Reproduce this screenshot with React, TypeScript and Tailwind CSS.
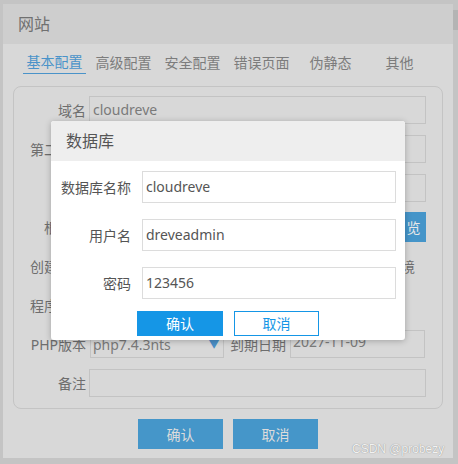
import React from "react"

const font = { fontFamily: '"Noto Sans", "Noto Sans CJK SC", sans-serif' }

function Row({ label, children }: { label: string; children?: React.ReactNode }) {
  return (
    <div className="flex h-[28px] items-center">
      <div className="w-[75px] shrink-0 pr-[3px] text-right text-[14px] text-[#6e6e6e]">{label}</div>
      {children}
    </div>
  )
}

function Field({ value, w = "w-[337px]" }: { value?: string; w?: string }) {
  return <div className={`${w} h-full border border-[#c3c3c3] pl-[3px] text-[14px] leading-[26px] text-[#7a7a7a]`}>{value}</div>
}

function DialogRow({ label, value }: { label: string; value: string }) {
  return (
    <div className="flex h-[32px] items-center">
      <div className="w-[80px] shrink-0 text-right text-[14px] text-[#555]">{label}</div>
      <div className="ml-[11px] h-full w-[254px] border border-[#dcdcdc] pl-[3px] text-[14px] leading-[30px] text-[#555]">{value}</div>
    </div>
  )
}

export default function App() {
  const tabs = ["基本配置", "高级配置", "安全配置", "错误页面", "伪静态", "其他"]
  return (
    <div className="relative h-[464px] w-[458px] overflow-hidden bg-[#c4c4c4]" style={font}>
      <div className="absolute right-0 top-[10px] h-[20px] w-[5px] bg-[#b4b4b4]" />
      {/* underlying window */}
      <div className="ml-[3px] mt-[4px] flex h-[454px] w-[450px] flex-col bg-[#d8d8d8]">
        <div className="flex h-[40px] shrink-0 items-center bg-[#cecece] pl-[15px] text-[16px] text-[#707070]">网站</div>
        <div className="flex pl-[17px] pt-[6px]">
          {tabs.map((t, i) => (
            <div key={t} className="w-[69px] px-[3px]">
              <div className={`flex h-[24px] items-center justify-center text-[14px] ${i === 0 ? "border-b border-[#4a93c9] text-[#4a93c9]" : "text-[#7c7c7c]"}`}>{t}</div>
            </div>
          ))}
        </div>
        <div className="ml-[10px] mt-[12px] flex h-[323px] w-[430px] flex-col gap-[11px] rounded-[8px] border border-[#c4c4c4] pt-[9px]">
          <Row label="域名"><Field value="cloudreve" /></Row>
          <Row label="第二域名"><Field /></Row>
          <Row label=""><Field /></Row>
          <Row label="根目录">
            <Field w="w-[310px]" />
            <div className="-my-[1px] ml-[2px] flex h-[30px] w-[25px] items-center justify-center bg-[#4595c9] text-[14px] text-[#e8e8e8]">览</div>
          </Row>
          <Row label="创建数据">
            <div className="flex w-[337px] justify-end pr-[11px] text-[14px] text-[#6e6e6e]">运行环境</div>
          </Row>
          <Row label="程序类型" />
          <Row label="PHP版本">
            <div className="ml-[1px] flex h-full w-[134px] items-center justify-between border border-[#c3c3c3] pl-[2px] pr-[3px] text-[14px] text-[#7a7a7a]">
              <span>php7.4.3nts</span>
              <span className="text-[12px] text-[#4a8fc7]">▼</span>
            </div>
            <div className="ml-[6px] w-[56px] text-[14px] text-[#6e6e6e]">到期日期</div>
            <div className="ml-[4px] h-full w-[135px] border border-[#c3c3c3] pl-[2px] text-[14px] leading-[22px] text-[#7a7a7a]">2027-11-09</div>
          </Row>
          <Row label="备注"><Field /></Row>
        </div>
        <div className="mt-[10px] flex justify-center gap-[10px]">
          <div className="flex h-[30px] w-[85px] items-center justify-center bg-[#4596c9] text-[14px] text-[#dcdcdc]">确认</div>
          <div className="flex h-[30px] w-[85px] items-center justify-center bg-[#4596c9] text-[14px] text-[#dcdcdc]">取消</div>
        </div>
      </div>

      {/* watermark */}
      <div className="absolute left-[352px] top-[440px] font-['Liberation_Sans',sans-serif] text-[12px] text-[#f2f2f2] [text-shadow:0_0_1px_#777]">CSDN @probezy</div>

      {/* dialog */}
      <div className="absolute left-[51px] top-[121px] flex h-[219px] w-[354px] flex-col overflow-hidden rounded-[3px] bg-white shadow-[0_1px_6px_rgba(0,0,0,0.25)]">
        <div className="flex h-[40px] shrink-0 items-center bg-[#eeeeee] pl-[15px] text-[16px] text-[#555]">数据库</div>
        <div className="flex flex-col gap-[16px] pt-[10px]">
          <DialogRow label="数据库名称" value="cloudreve" />
          <DialogRow label="用户名" value="dreveadmin" />
          <DialogRow label="密码" value="123456" />
        </div>
        <div className="ml-[86px] mt-[12px] flex gap-[11px]">
          <div className="flex h-[25px] w-[86px] items-center justify-center bg-[#1596e6] text-[14px] text-white">确认</div>
          <div className="flex h-[25px] w-[85px] items-center justify-center border border-[#1596e6] text-[14px] text-[#1596e6]">取消</div>
        </div>
      </div>
    </div>
  )
}
